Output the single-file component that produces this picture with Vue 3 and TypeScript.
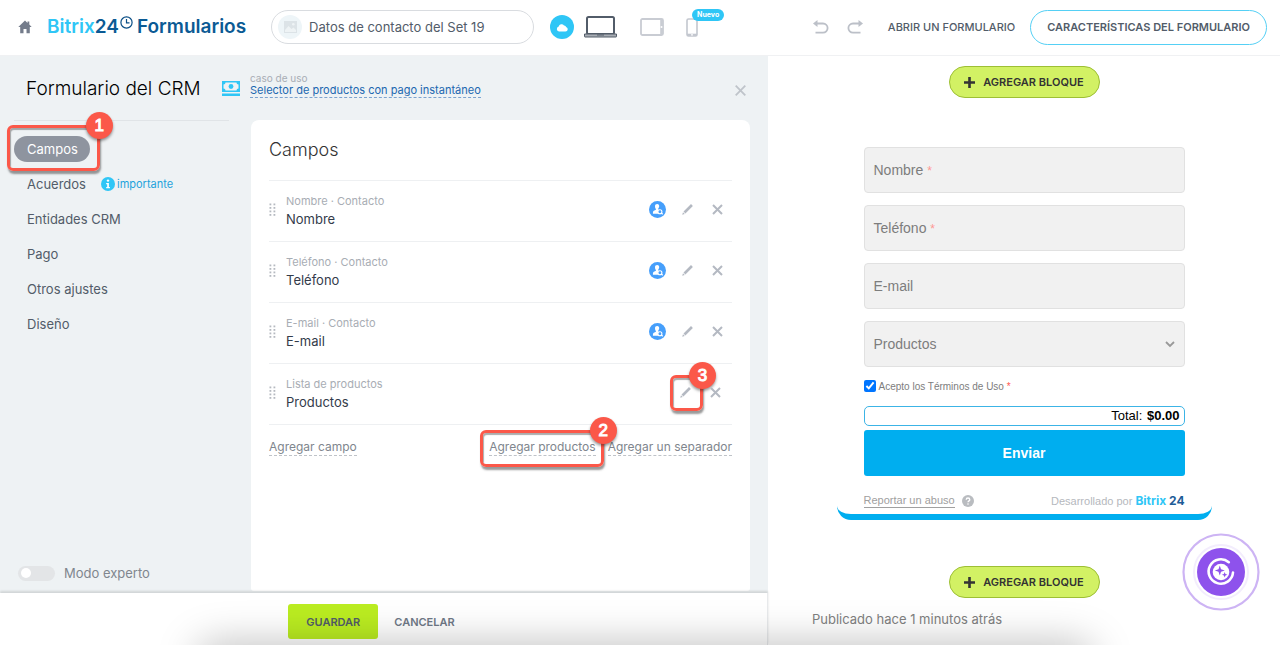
<script setup lang="ts">
import { ref } from 'vue'

interface NavItem { label: string; active?: boolean; badge?: string }
interface FieldRow { source: string; name: string; contact: boolean }
interface PreviewField { id: string; label: string; type: string; required: boolean }

const nav: NavItem[] = [
  { label: 'Campos', active: true },
  { label: 'Acuerdos', badge: 'importante' },
  { label: 'Entidades CRM' },
  { label: 'Pago' },
  { label: 'Otros ajustes' },
  { label: 'Diseño' },
]

const rows: FieldRow[] = [
  { source: 'Nombre · Contacto', name: 'Nombre', contact: true },
  { source: 'Teléfono · Contacto', name: 'Teléfono', contact: true },
  { source: 'E-mail · Contacto', name: 'E-mail', contact: true },
  { source: 'Lista de productos', name: 'Productos', contact: false },
]

const previewFields: PreviewField[] = [
  { id: 'nombre', label: 'Nombre', type: 'text', required: true },
  { id: 'telefono', label: 'Teléfono', type: 'tel', required: true },
  { id: 'email', label: 'E-mail', type: 'email', required: false },
]

const formName = ref('Datos de contacto del Set 19')
const expert = ref(false)
const accepted = ref(true)
const values = ref<Record<string, string>>({ nombre: '', telefono: '', email: '' })
</script>

<template>
  <div class="app">
    <header class="top">
      <a href="#" class="home" aria-label="Inicio">
        <svg width="14" height="14" viewBox="0 0 14 14"><path d="M7 0.5 0.3 7h1.9v6.2h3.3V9h3v4.2h3.3V7h1.9L11.300 4.600V1.500H9.500v1.400z" fill="#747c8b" /></svg>
      </a>
      <a href="#" class="brand">
        <span class="sky">Bitrix</span><span>24</span>
        <svg class="clock" width="13" height="13" viewBox="0 0 13 13" fill="none" stroke="#0b4f86" stroke-width="1.200"><circle cx="6.500" cy="6.500" r="5.600" /><path d="M6.500 3v3.800h3" /></svg>
        <span>Formularios</span>
      </a>
      <label class="name-box">
        <span class="thumb">
          <svg width="13" height="12" viewBox="0 0 13 12"><path d="M0 0h13v12H0z" fill="#dce3e7" /><path d="M1 9l3.500-4 3 3L9.500 6.500 12 9v2H1z" fill="#eef3f5" /><circle cx="9.300" cy="3.300" r="1.300" fill="#eef3f5" /></svg>
        </span>
        <input v-model="formName" type="text" aria-label="Nombre del formulario" />
      </label>
      <div class="devices">
        <button type="button" class="cloud" aria-label="Guardado">
          <svg width="12" height="9" viewBox="0 0 12 9"><path d="M3 8.500h6.500a2.300 2.300 0 0 0 .6-4.500A2 2 0 0 0 8 2.400 3 3 0 0 0 2.700 3.600 2.500 2.500 0 0 0 3 8.500z" fill="#fff" /></svg>
        </button>
        <button type="button" class="laptop" aria-label="Escritorio">
          <svg width="33" height="22" viewBox="0 0 33 22"><rect x="3" y="1" width="27" height="17" rx="1.500" fill="#fff" stroke="#525c69" stroke-width="2" /><path d="M.5 18h32v2.500q0 .5-.5.500H1q-.5 0-.5-.5z" fill="#a8adb4" stroke="#525c69" /><path d="M13 19h7" stroke="#525c69" /></svg>
        </button>
        <button type="button" class="tablet" aria-label="Tableta">
          <svg width="24" height="18" viewBox="0 0 24 18" fill="none" stroke="#c9ccd3"><rect x="1" y="1" width="22" height="16" rx="1.500" stroke-width="1.800" /><path d="M21.500 1v16" stroke-width="2.600" /><circle cx="21.500" cy="9" r="1" fill="#fff" stroke="none" /></svg>
        </button>
        <button type="button" class="phone" aria-label="Móvil">
          <svg width="12" height="19" viewBox="0 0 12 19" fill="none" stroke="#c3c7cf"><rect x="1" y="1" width="10" height="17" rx="1.500" stroke-width="1.600" /><path d="M1 16.800h10" stroke-width="2.200" /><circle cx="6" cy="16.800" r=".9" fill="#fff" stroke="none" /></svg>
          <span class="new">Nuevo</span>
        </button>
      </div>
      <div class="actions">
        <button type="button" aria-label="Deshacer">
          <svg width="16" height="14" viewBox="0 0 16 14" fill="none" stroke="#bcc0c8" stroke-width="1.800"><path d="M2 3.500h8a4.600 4.600 0 0 1 0 9.200H2.500" /><path d="M4.500 0v7L0 3.500z" fill="#bcc0c8" stroke="none" /></svg>
        </button>
        <button type="button" aria-label="Rehacer">
          <svg width="16" height="14" viewBox="0 0 16 14" fill="none" stroke="#bcc0c8" stroke-width="1.800"><path d="M14 3.500H6a4.600 4.600 0 0 0 0 9.200h7.500" /><path d="M11.500 0v7L16 3.500z" fill="#bcc0c8" stroke="none" /></svg>
        </button>
        <a href="#" class="open">ABRIR UN FORMULARIO</a>
        <button type="button" class="features">CARACTERÍSTICAS DEL FORMULARIO</button>
      </div>
    </header>

    <main class="main">
      <section class="editor">
        <div class="panel">
          <div class="panel-head">
            <h1>Formulario del CRM</h1>
            <svg class="cash" width="18" height="15" viewBox="0 0 18 15"><path d="M0 0h18v11H0z" fill="#2fc6f6" /><path d="M3.500 1.500h11a2 2 0 0 0 2 2v4a2 2 0 0 0-2 2h-11a2 2 0 0 0-2-2v-4a2 2 0 0 0 2-2z" fill="#eef2f4" /><circle cx="9" cy="5.500" r="2.400" fill="#2fc6f6" /><path d="M0 12.500h18V15H0z" fill="#2fc6f6" /></svg>
            <div class="case">
              <span>caso de uso</span>
              <a href="#">Selector de productos con pago instantáneo</a>
            </div>
            <button type="button" class="close" aria-label="Cerrar">
              <svg width="11" height="11" viewBox="0 0 11 11" stroke="#bfc4ca" stroke-width="1.800"><path d="M.7.7l9.600 9.600M10.300.7.7 10.300" /></svg>
            </button>
          </div>
          <div class="panel-body">
            <aside class="side">
              <nav>
                <div v-for="item in nav" :key="item.label" class="nav-row">
                  <a href="#" :class="['nav-link', { active: item.active }]">{{ item.label }}</a>
                  <span v-if="item.badge" class="info">
                    <svg width="14" height="14" viewBox="0 0 14 14"><circle cx="7" cy="7" r="7" fill="#2fc6f6" /><circle cx="7" cy="3.600" r="1.200" fill="#fff" /><path d="M5.200 6h2.700v4h1v1.200H5.200V10h1V7.200h-1z" fill="#fff" /></svg>
                    {{ item.badge }}
                  </span>
                  <span v-if="item.active" class="mark mark-one"><b>1</b></span>
                </div>
              </nav>
              <label class="expert"><input v-model="expert" type="checkbox" />Modo experto</label>
            </aside>
            <section class="card">
              <h2>Campos</h2>
              <ul>
                <li v-for="row in rows" :key="row.name">
                  <svg class="grip" width="7" height="14" viewBox="0 0 7 14" fill="#b5b9c0"><template v-for="n in 4" :key="n"><rect x="0.500" :y="n * 3.500 - 3" width="1.800" height="1.800" /><rect x="4.500" :y="n * 3.500 - 3" width="1.800" height="1.800" /></template></svg>
                  <div class="texts"><small>{{ row.source }}</small><span>{{ row.name }}</span></div>
                  <div :class="['tools', { tight: !row.contact }]">
                    <svg v-if="row.contact" width="17" height="17" viewBox="0 0 17 17"><circle cx="8.500" cy="8.500" r="8.500" fill="#469ffb" /><path d="M8.200 3c1.500 0 2.100 1 2 2.300-.1 1.300-.7 2-1 2.500v.8l.8.4-1 1.500.8 2.300H3.900c0-2 .2-2.700 1-3.100l2-.9v-.7C6.300 7.500 6 6.500 6 5.300 6 3.900 6.800 3 8.200 3z" fill="#fff" /><circle cx="10.900" cy="10.700" r="2" fill="#469ffb" stroke="#fff" stroke-width="1.100" /><path d="M12.200 12l1.600 1.300" stroke="#fff" stroke-width="1.300" /></svg>
                    <button type="button" :aria-label="'Editar ' + row.name">
                      <svg width="11" height="11" viewBox="0 0 11 11" fill="#b4b9c2"><path d="M9 .1 10.900 2 3.400 9.500 1.500 7.600zM1 8.200 2.800 10 .2 10.800z" /></svg>
                      <span v-if="!row.contact" class="mark mark-three"><b>3</b></span>
                    </button>
                    <button type="button" :aria-label="'Eliminar ' + row.name">
                      <svg width="11" height="11" viewBox="0 0 11 11" stroke="#b4b9c2" stroke-width="2"><path d="M1 1l9 9M10 1l-9 9" /></svg>
                    </button>
                  </div>
                </li>
              </ul>
              <div class="adders">
                <a href="#">Agregar campo</a>
                <span class="boxed"><a href="#">Agregar productos</a><span class="mark mark-two"><b>2</b></span></span>
                <a href="#">Agregar un separador</a>
              </div>
            </section>
          </div>
        </div>
        <footer class="save-bar">
          <button type="button" class="save">GUARDAR</button>
          <button type="button" class="cancel">CANCELAR</button>
        </footer>
      </section>

      <section class="preview">
        <button type="button" class="add-block">
          <svg width="11" height="11" viewBox="0 0 11 11"><path d="M5.500 0v11M0 5.500h11" stroke="#333" stroke-width="2.600" /></svg>AGREGAR BLOQUE
        </button>
        <form class="form" @submit.prevent>
          <div v-for="f in previewFields" :key="f.id" class="field">
            <input :id="f.id" v-model="values[f.id]" :type="f.type" />
            <label :for="f.id">{{ f.label }} <i v-if="f.required">*</i></label>
          </div>
          <div class="field">
            <select aria-label="Productos"><option>Productos</option></select>
            <svg class="chev" width="10" height="7" viewBox="0 0 10 7" fill="none" stroke="#999" stroke-width="1.800"><path d="M1 1l4 4 4-4" /></svg>
          </div>
          <label class="accept"><input v-model="accepted" type="checkbox" /><span>Acepto los Términos de Uso <i>*</i></span></label>
          <div class="total">Total: <b>$0.00</b></div>
          <button type="submit" class="send">Enviar</button>
          <div class="form-foot">
            <a href="#">Reportar un abuso</a>
            <svg width="12" height="12" viewBox="0 0 12 12"><circle cx="6" cy="6" r="6" fill="#b9bcc0" /><path d="M4.200 4.700c0-2.300 3.600-2.300 3.600 0 0 1.200-1.800 1.200-1.800 2.600" stroke="#fff" stroke-width="1.300" fill="none" /><circle cx="6" cy="9" r=".8" fill="#fff" /></svg>
            <span class="by">Desarrollado por <b><em>Bitrix</em> 24</b></span>
          </div>
        </form>
        <button type="button" class="add-block">
          <svg width="11" height="11" viewBox="0 0 11 11"><path d="M5.500 0v11M0 5.500h11" stroke="#333" stroke-width="2.600" /></svg>AGREGAR BLOQUE
        </button>
        <p class="published">Publicado hace 1 minutos atrás</p>
      </section>
    </main>

    <button type="button" class="copilot" aria-label="CoPilot">
      <svg width="78" height="78" viewBox="0 0 78 78" fill="none"><circle cx="39" cy="39" r="37.500" fill="#fff" stroke="#cdb4f4" stroke-width="2.200" /><circle cx="39" cy="39" r="27" stroke="#f3edfd" stroke-width="2" /><circle cx="39" cy="39" r="24" fill="#8e52ec" /><path d="M46.800 29.200A12.200 12.200 0 1 0 51 39.500" stroke="#fff" stroke-width="2.600" stroke-linecap="round" /><circle cx="39" cy="39" r="8.300" fill="#fff" /><path d="M37.800 32.500l1.200 3.700 3.800 1.300-3.800 1.300-1.200 3.800-1.300-3.800-3.700-1.300 3.700-1.300zM42.700 39l.7 2 2 .7-2 .8-.7 2-.8-2-2-.8 2-.7z" fill="#8e52ec" /></svg>
    </button>
    <div class="dock-shade" aria-hidden="true"></div>
  </div>
</template>

<style>
body { background: #fff; }
</style>

<style scoped>
* { box-sizing: border-box; }
.app { position: relative; display: flex; flex-direction: column; min-height: 100vh; overflow: hidden; background: #fff; color: #525c69; font: 13px/18px Inter, "Liberation Sans", sans-serif; }
button { padding: 0; border: 0; background: none; color: inherit; font: inherit; cursor: pointer; }
svg { display: block; flex: none; }
a { color: inherit; text-decoration: none; }
i { color: #ff5752; font-style: normal; }

.top { display: flex; align-items: center; height: 56px; padding: 0 13px 1px 18px; border-bottom: 1px solid #f0f1f3; }
.brand { display: flex; align-items: center; margin-left: 15px; color: #0b5a94; font-size: 19px; line-height: 24px; font-weight: 600; }
.brand .sky { color: #2fc6f6; }
.brand .clock { align-self: flex-start; margin: 1px 4px 0 1px; }
.name-box { display: flex; align-items: center; width: 263px; height: 34px; margin-left: 25px; padding: 0 6px; border: 1px solid #d9dce0; border-radius: 17px; }
.thumb { display: flex; flex: none; align-items: center; justify-content: center; width: 24px; height: 24px; border-radius: 50%; background: #eef5f8; }
.name-box input { flex: 1; min-width: 0; padding: 0 0 0 7px; border: 0; outline: 0; background: none; color: #525c69; font: inherit; }
.devices { display: flex; align-items: center; margin-left: 16px; }
.cloud { display: flex; align-items: center; justify-content: center; width: 24px; height: 24px; border-radius: 50%; background: #2fc6f6; }
.laptop { margin-left: 10px; }
.tablet { margin-left: 23px; }
.phone { position: relative; margin-left: 22px; }
.new { position: absolute; left: 6px; top: -9px; padding: 0 5px; border-radius: 6px; background: #2fc6f6; color: #fff; font-size: 7px; line-height: 12px; font-weight: 700; }
.actions { display: flex; align-items: center; gap: 18px; margin-left: auto; font-size: 11px; font-weight: 500; }
.open { margin-left: 7px; }
.features { height: 35px; margin-left: -3px; padding: 0 16px; border: 1px solid #55d0f5; border-radius: 18px; font-weight: 600; }

.main { display: grid; flex: 1; grid-template-columns: 3fr 2fr; }
.editor { display: flex; flex-direction: column; }
.panel { display: flex; flex: 1; flex-direction: column; background: #eef2f4; }
.panel-head { display: flex; align-items: center; height: 64px; padding: 0 22px 0 26px; }
h1 { width: 196px; margin: 0; padding-top: 2px; color: #000; font-size: 19px; line-height: 24px; font-weight: 300; white-space: nowrap; }
.cash { margin-right: 10px; }
.case { display: flex; flex-direction: column; align-items: flex-start; margin-bottom: 6px; font-size: 11px; line-height: 13px; }
.case span { color: #a8adb4; font-size: 10px; line-height: 12px; }
.case a { border-bottom: 1px dashed #7ba3d0; color: #2067b0; }
.close { margin-left: auto; padding-top: 4px; }
.panel-body { display: grid; flex: 1; grid-template-columns: 251px 1fr; padding-right: 18px; }
.side { display: flex; flex-direction: column; justify-content: space-between; }
nav { margin: 0 22px 0 14px; padding-top: 10px; border-top: 1px solid #e0e4e7; }
.nav-row { position: relative; display: flex; align-items: center; width: max-content; height: 35px; gap: 3px; }
.nav-link { padding: 0 12px 0 13px; border-radius: 13px; line-height: 26px; }
.nav-link.active { background: #8e949f; color: #fff; }
.info { display: flex; align-items: center; gap: 2px; color: #1fa3dc; font-size: 11px; }
.expert { display: flex; align-items: center; gap: 9px; margin: 0 0 11px 18px; color: #80868e; }
.expert input { display: flex; align-items: center; width: 37px; height: 15px; margin: 0; padding: 3px; border-radius: 8px; background: #e3e5e7; appearance: none; }
.expert input::before { content: ""; width: 10px; height: 10px; border-radius: 50%; background: #fff; }
.expert input:checked { justify-content: flex-end; background: #2fc6f6; }
.card { margin-bottom: 2px; padding: 18px 18px 0; border-radius: 8px 8px 3px 3px; background: #fff; }
h2 { height: 42px; margin: 0; color: #333; font-size: 18px; line-height: 24px; font-weight: 300; }
ul { margin: 0; padding: 0; border-top: 1px solid #eef0f2; list-style: none; }
li { display: flex; align-items: center; height: 61px; padding-bottom: 3px; border-bottom: 1px solid #eef0f2; }
.grip { margin-right: 10px; }
.texts { display: flex; flex-direction: column; color: #333b4a; }
.texts small { color: #a8adb4; font-size: 11px; line-height: 18px; }
.tools { display: flex; align-items: center; gap: 19px; margin-left: auto; padding-right: 9px; }
.tools > svg { margin-right: -3px; }
.tools.tight { padding-right: 11px; }
.tools button { position: relative; }
.adders { display: flex; justify-content: space-between; margin-top: 14px; color: #80868e; font-size: 12px; line-height: 16px; }
.adders a { display: inline-block; border-bottom: 1px dashed #bfc3c8; }
.adders > a:first-child { margin-right: auto; }
.boxed { position: relative; margin-right: 12px; }

.mark { position: absolute; border: 3px solid #fb5849; border-radius: 6px; box-shadow: 1px 3px 2px rgba(70, 70, 70, .55), inset 1px 2px 1px rgba(70, 70, 70, .45); pointer-events: none; }
.mark b { position: absolute; top: -16px; right: -16px; display: grid; place-items: center; width: 27px; height: 27px; border-radius: 50%; background: #fb5849; color: #fff; font: 400 17px/27px "Liberation Sans", sans-serif; -webkit-text-stroke: 1px #fff; box-shadow: 0 2px 3px rgba(0, 0, 0, .4); }
.mark-one { inset: -6px -10px -5px -7px; }
.mark-two { inset: -9px -8px -11px -9px; }
.mark-three { inset: -12px -12px -13px -10px; }

.save-bar { z-index: 1; display: flex; justify-content: center; height: 52px; padding: 11px 8px 0 0; border-right: 1px solid #e8eaec; background: #fff; box-shadow: 0 -2px 2px rgba(0, 0, 0, .12); font-size: 11px; font-weight: 600; }
.save { width: 90px; height: 35px; border-radius: 3px; background: #bbed21; }
.cancel { height: 35px; padding: 0 16px; color: #707987; }

.preview { display: flex; flex-direction: column; align-items: center; padding-top: 10px; }
.add-block { display: flex; align-items: center; justify-content: center; gap: 8px; width: 151px; height: 32px; border: 1px solid #9dbf35; border-radius: 16px; background: #d2f164; color: #333; font-size: 11px; font-weight: 600; }
.form { display: flex; flex-direction: column; width: 375px; margin: 0 0 46px; padding: 49px 27px 6px; border-bottom: 6px solid #00aeef; border-radius: 0 0 14px 14px; font-family: "Liberation Sans", Arial, sans-serif; }
.field { display: grid; align-items: center; height: 46px; margin-bottom: 12px; border: 1px solid #e1e1e1; border-radius: 4px; background: #f1f1f1; color: #7d7d7d; font-size: 14px; }
.field > * { grid-area: 1 / 1; }
.field input, .field select { width: 100%; height: 44px; padding: 0 9px; border: 0; outline: 0; background: none; color: inherit; font: inherit; appearance: none; }
.field label { margin-left: 9px; pointer-events: none; }
.field i { color: #ff9793; font-size: 12px; }
.chev { justify-self: end; margin-right: 9px; pointer-events: none; }
.accept { display: flex; align-items: center; gap: 3px; height: 13px; margin-bottom: 14px; color: #7d7d7d; font-size: 10px; }
.accept input { width: 12px; height: 12px; margin: 0; accent-color: #0075ff; }
.accept span { padding-top: 3px; }
.total { height: 20px; padding-right: 4px; border: 1px solid #3cb4e6; border-radius: 5px; color: #000; font-size: 13px; line-height: 18px; text-align: right; }
.total b { margin-left: 1px; }
.send { height: 46px; margin-top: 4px; border-radius: 3px; background: #00aeef; color: #fff; font-size: 14px; font-weight: 700; }
.form-foot { display: flex; align-items: center; margin-top: 18px; color: #a0a0a0; font-size: 11px; line-height: 13px; }
.form-foot a { border-bottom: 1px solid #a0a0a0; }
.form-foot > svg { margin-left: 7px; }
.by { margin-left: auto; color: #b5b8bd; }
.by b { color: #1d5c97; font-family: Inter, sans-serif; font-size: 12px; }
.by em { color: #2fc6f6; font-style: normal; }
.published { align-self: flex-start; margin: 12px 0 0 44px; color: #808080; }

.copilot { position: absolute; right: 20px; bottom: 34px; }
.dock-shade { position: absolute; z-index: 2; inset: auto 190px -32px 200px; height: 30px; border-radius: 15px; box-shadow: 0 0 40px 4px rgba(0, 0, 0, .26); pointer-events: none; }
</style>
